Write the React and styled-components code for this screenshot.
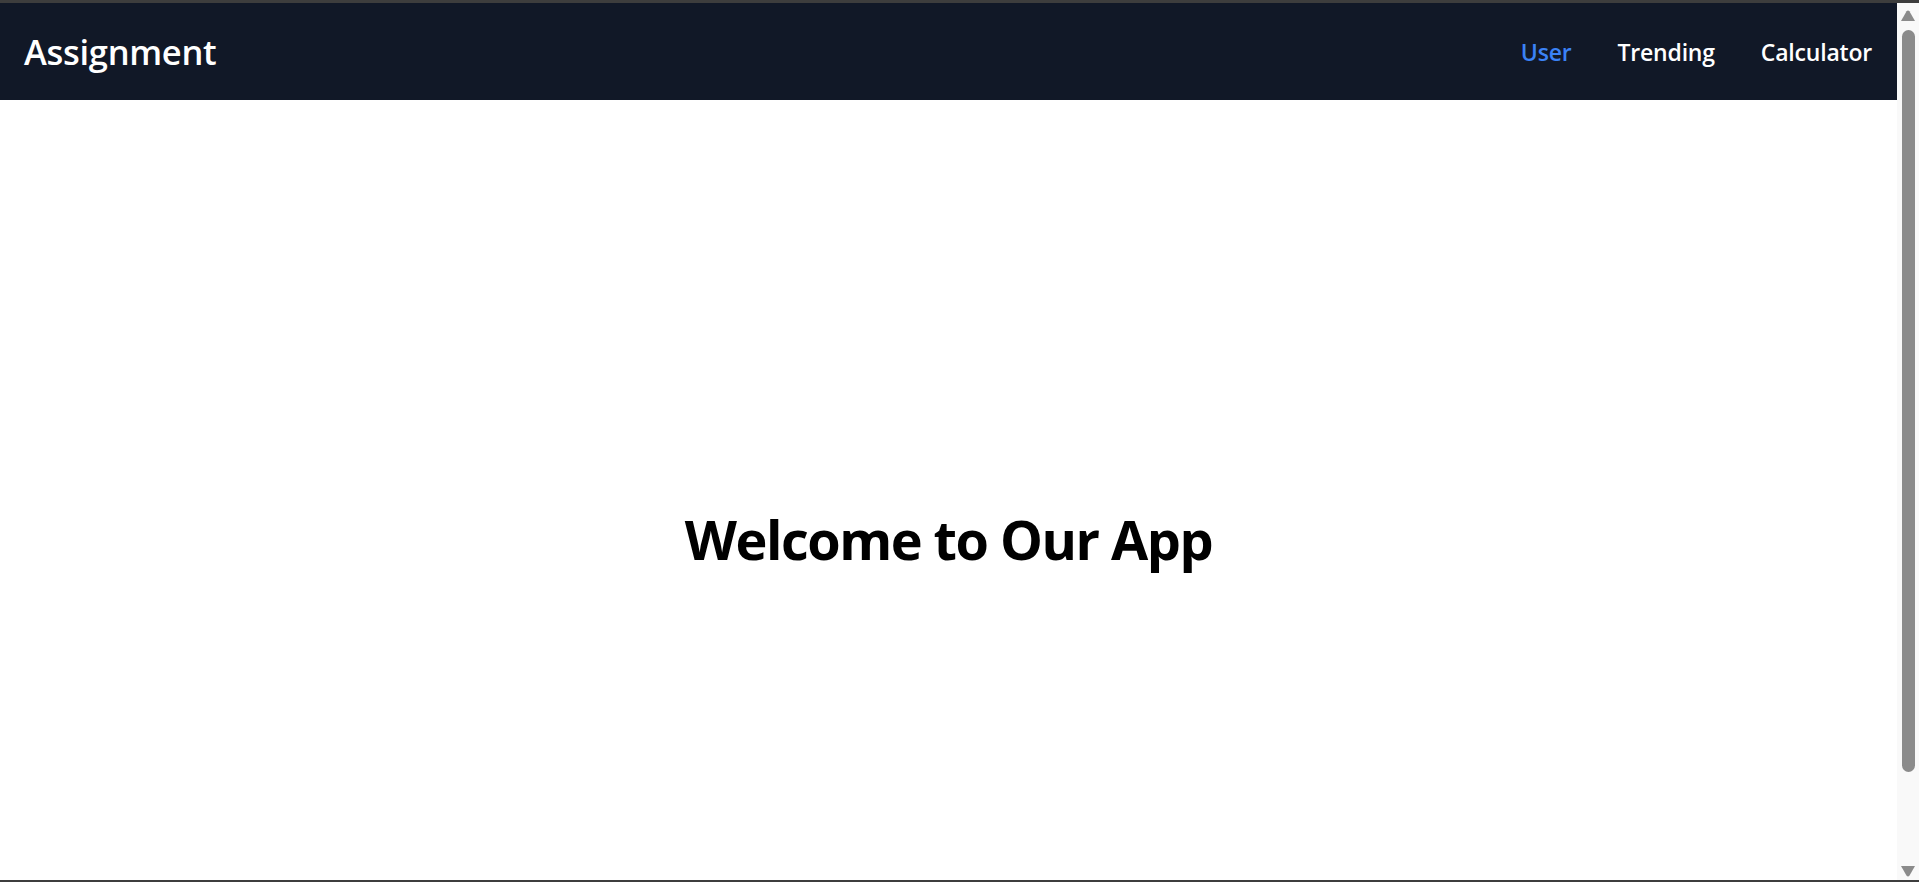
import React, { useState } from 'react'
import styled, { createGlobalStyle } from 'styled-components'


const GlobalStyle = createGlobalStyle`
    html, body {
        margin: 0;
        padding: 0;
        height: 100%;
        overflow: hidden;
        background-color: #ffffff;
    }
    #root {
        height: 100%;
    }
    * {
        box-sizing: border-box;
    }
`

const Frame = styled.div`
    height: 100vh;
    display: flex;
    border-top: 3px solid #3d3d3d;
    border-bottom: 2px solid #3d3d3d;
    font-family: "Open Sans", "Noto Sans", "Liberation Sans", sans-serif;
`

const Scroller = styled.div`
    flex: 1;
    min-width: 0;
    overflow-y: scroll;
    scrollbar-width: none;
    background-color: #ffffff;

    &::-webkit-scrollbar {
        display: none;
    }
`

const Rail = styled.div`
    width: 22px;
    flex-shrink: 0;
    display: flex;
    flex-direction: column;
    align-items: center;
    padding: 7px 0 3px;
    background-color: #f9f9f9;
`

const Arrow = styled.svg`
    width: 14px;
    height: 11px;
    fill: #8b8b8b;
    flex-shrink: 0;
    margin-top: ${({ $down }) => ($down ? 'auto' : '0')};
`

const Thumb = styled.div`
    width: 13px;
    height: 742px;
    margin-top: 9px;
    border-radius: 7px;
    background-color: #8b8b8b;
`

const Navbar = styled.nav`
    height: 97px;
    background-color: #111827;
    display: flex;
    align-items: center;
    justify-content: space-between;
    padding: 0 25px 0 24px;
`

const Logo = styled.div`
    font-size: 34.5px;
    font-weight: 600;
    color: #ffffff;
    letter-spacing: -0.3px;
`

const Links = styled.div`
    display: flex;
    align-items: center;
    gap: 46px;
`

const NavLink = styled.a`
    font-size: 23px;
    font-weight: 600;
    color: ${({ $active }) => ($active ? '#3b82f6' : '#ffffff')};
    text-decoration: none;
    cursor: pointer;
    letter-spacing: -0.2px;

    &:hover {
        color: #60a5fa;
    }
`

const Main = styled.main`
    min-height: 877px;
    display: flex;
    align-items: center;
    justify-content: center;
`

const Heading = styled.h1`
    margin: 0;
    font-size: 54px;
    font-weight: 700;
    color: #000000;
    letter-spacing: -1.5px;
`

const links = ['User', 'Trending', 'Calculator']

const App = () => {
    const [active, setActive] = useState('User')

    return (
        <>
            <GlobalStyle />
            <Frame>
                <Scroller>
                    <Navbar>
                        <Logo>Assignment</Logo>
                        <Links>
                            {links.map((link) => (
                                <NavLink
                                    key={link}
                                    $active={active === link}
                                    onClick={() => setActive(link)}
                                >
                                    {link}
                                </NavLink>
                            ))}
                        </Links>
                    </Navbar>
                    <Main>
                        <Heading>Welcome to Our App</Heading>
                    </Main>
                </Scroller>
                <Rail>
                    <Arrow viewBox="0 0 14 11">
                        <path d="M5.6 1.2 Q7 -0.4 8.4 1.2 L14 11 L0 11 Z" />
                    </Arrow>
                    <Thumb />
                    <Arrow $down viewBox="0 0 14 11">
                        <path d="M5.6 9.8 Q7 11.4 8.4 9.8 L14 0 L0 0 Z" />
                    </Arrow>
                </Rail>
            </Frame>
        </>
    )
}

export default App
